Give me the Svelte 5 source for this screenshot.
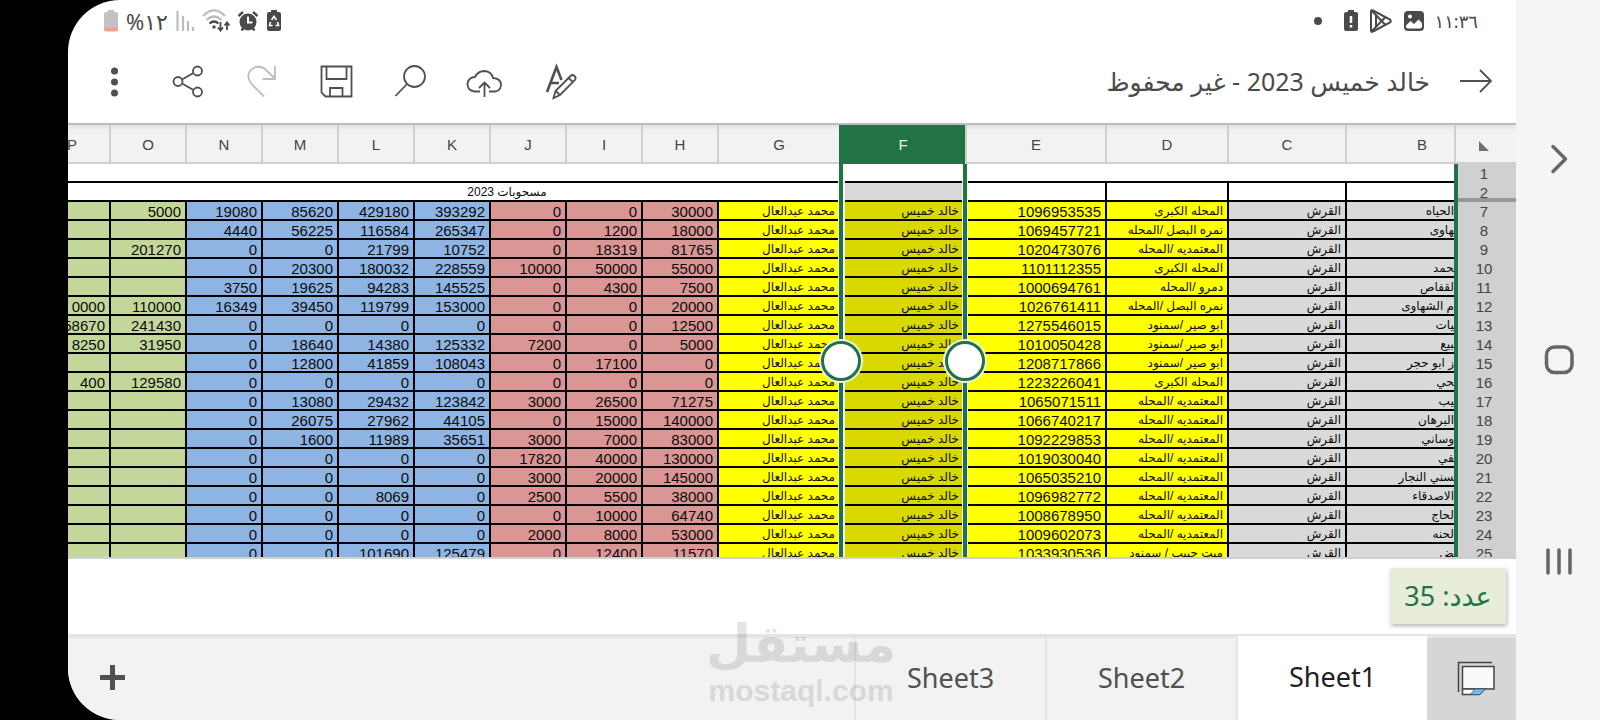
<script>
  const columns = [
    { id: 'B', width: 109 },
    { id: 'C', width: 118 },
    { id: 'D', width: 122 },
    { id: 'E', width: 140 },
    { id: 'F', width: 126 },
    { id: 'G', width: 122 },
    { id: 'H', width: 76 },
    { id: 'I', width: 76 },
    { id: 'J', width: 76 },
    { id: 'K', width: 76 },
    { id: 'L', width: 76 },
    { id: 'M', width: 76 },
    { id: 'N', width: 76 },
    { id: 'O', width: 76 },
    { id: 'P', width: 76 }
  ];
  const headWidth = 62;
  const selected = 'F';
  const tableWidth = headWidth + columns.reduce((sum, c) => sum + c.width, 0);
  const selectedIndex = columns.findIndex((c) => c.id === selected);
  const selectionStart = headWidth + columns.slice(0, selectedIndex).reduce((sum, c) => sum + c.width, 0) - 2;
  const selectionWidth = columns[selectedIndex].width + 2;

  const kabir = 'المحله الكبرى';
  const namra = 'نمره البصل /المحله';
  const motam = 'المعتمديه /المحله';
  const abu = 'ابو صير /سمنود';

  // row number, B, D, E, then H to P
  const rows = [
    [7, 'الحياه', kabir, '1096953535', 30000, 0, 0, 393292, 429180, 85620, 19080, 5000, ''],
    [8, '\u200dهاوى', namra, '1069457721', 18000, 1200, 0, 265347, 116584, 56225, 4440, '', ''],
    [9, '', motam, '1020473076', 81765, 18319, 0, 10752, 21799, 0, 0, 201270, ''],
    [10, '\u200dحمد', kabir, '1101112355', 55000, 50000, 10000, 228559, 180032, 20300, 0, '', ''],
    [11, 'لقفاص', 'دمرو /المحله', '1000694761', 7500, 4300, 0, 145525, 94283, 19625, 3750, '', ''],
    [12, 'م الشهاوى', namra, '1026761411', 20000, 0, 0, 153000, 119799, 39450, 16349, 110000, '0000'],
    [13, '\u200dيات', abu, '1275546015', 12500, 0, 0, 0, 0, 0, 0, 241430, 58670],
    [14, '\u200dبيع', abu, '1010050428', 5000, 0, 7200, 125332, 14380, 18640, 0, 31950, 8250],
    [15, 'ز ابو حجر', abu, '1208717866', 0, 17100, 0, 108043, 41859, 12800, 0, '', ''],
    [16, '\u200dحي', kabir, '1223226041', 0, 0, 0, 0, 0, 0, 0, 129580, 400],
    [17, '\u200dيب', motam, '1065071511', 71275, 26500, 3000, 123842, 29432, 13080, 0, '', ''],
    [18, 'البرهان', motam, '1066740217', 140000, 15000, 0, 44105, 27962, 26075, 0, '', ''],
    [19, 'وساني', motam, '1092229853', 83000, 7000, 3000, 35651, 11989, 1600, 0, '', ''],
    [20, '\u200dفي', motam, '1019030040', 130000, 40000, 17820, 0, 0, 0, 0, '', ''],
    [21, '\u200dسني النجار', motam, '1065035210', 145000, 20000, 3000, 0, 0, 0, 0, '', ''],
    [22, 'الاصدقاء', motam, '1096982772', 38000, 5500, 2500, 0, 8069, 0, 0, '', ''],
    [23, 'لحاج', motam, '1008678950', 64740, 10000, 0, 0, 0, 0, 0, '', ''],
    [24, 'لحنه', motam, '1009602073', 53000, 8000, 2000, 0, 0, 0, 0, '', ''],
    [25, '\u200dض', 'ميت حبيب / سمنود', '1033930536', 11570, 12400, 0, 125479, 101690, 0, 0, '', '']
  ];
  const tones = ['red', 'red', 'red', 'blue', 'blue', 'blue', 'blue', 'green', 'green'];

  let active = $state('Sheet1');
</script>

<div class="device" dir="rtl" lang="ar">
  <nav class="system">
    <button aria-label="رجوع">
      <svg width="40" height="40" viewBox="0 0 40 40"><path d="M14 7.500 L26.500 20 L14 32.500" class="nav-line" /></svg>
    </button>
    <button aria-label="الرئيسية">
      <svg width="40" height="40" viewBox="0 0 40 40"><rect x="7.500" y="7" width="25.500" height="25.500" rx="8" class="nav-line" /></svg>
    </button>
    <button aria-label="التطبيقات الأخيرة">
      <svg width="40" height="40" viewBox="0 0 40 40"><path d="M9 9V32M20 9V32M31 9V32" class="nav-line" /></svg>
    </button>
  </nav>

  <main class="screen">
    <div class="status">
      <div class="status-group">
        <span class="clock" dir="ltr">١١:٣٦</span>
        <svg width="22" height="22" viewBox="0 0 22 22">
          <rect x="1" y="1" width="20" height="20" rx="4" fill="#4a4a4a" />
          <circle cx="7" cy="6.500" r="2" fill="#fff" />
          <path d="M3 15.500 L7.500 11 L11 14 L15.500 9.500 L19 13 V16.500 Q19 18.500 17 18.500 H5 Q3 18.500 3 16.500Z" fill="#fff" />
        </svg>
        <svg width="24" height="26" viewBox="0 0 24 26" class="thin">
          <path d="M2 3.500 Q2 1.500 4 2.500 L21 11.500 Q22.500 13 21 14.500 L4 23.500 Q2 24.500 2 22.500Z" />
          <path d="M3 3 L16.500 17 M3 23 L16.500 9 M7 7.500 L7 18.500" />
        </svg>
        <svg width="16" height="22" viewBox="0 0 16 22">
          <path d="M5 0h6v2h2q2 0 2 2v15q0 2-2 2H3q-2 0-2-2V4q0-2 2-2h2z" fill="#4a4a4a" />
          <path d="M8 6v7M8 15v2.500" stroke="#fff" stroke-width="2.500" />
        </svg>
        <svg width="10" height="10" viewBox="0 0 10 10" class="dot"><circle cx="5" cy="5" r="4" fill="#4a4a4a" /></svg>
      </div>
      <div class="status-group end">
        <svg width="16" height="22" viewBox="0 0 16 22">
          <path d="M5 0h6v2h2q2 0 2 2v15q0 2-2 2H3q-2 0-2-2V4q0-2 2-2h2z" fill="#4a4a4a" />
          <path d="M5.500 10 L8 6.500 L10.500 10 M11.500 12 L12.500 15.500 H9.500 M6.500 15.500 H3.500 L4.500 12" fill="none" stroke="#fff" stroke-width="1.600" />
        </svg>
        <svg width="22" height="22" viewBox="0 0 22 22">
          <circle cx="11" cy="12" r="8.500" fill="#4a4a4a" />
          <path d="M1.500 6 L6 2 M20.500 6 L16 2 M4.500 20.500 L6.500 18 M17.500 20.500 L15.500 18" stroke="#4a4a4a" stroke-width="2.400" />
          <path d="M11 6.500 V12.500 H15.500" fill="none" stroke="#fff" stroke-width="2" />
        </svg>
        <svg width="28" height="24" viewBox="0 0 28 24" fill="none">
          <path d="M1 7 Q12 -4 23 7" stroke="#bcbcbc" stroke-width="2.200" />
          <path d="M4.500 11 Q12 4 19.500 11" stroke="#bcbcbc" stroke-width="2.200" />
          <path d="M7.500 14.500 Q12 10.500 16.500 14.500" stroke="#4a4a4a" stroke-width="2.200" />
          <circle cx="12" cy="18" r="1.700" fill="#4a4a4a" />
          <path d="M18.500 13V21M16 18.500L18.500 21.500L21 18.500M25 21V14M22.500 16.500L25 13.500L27.500 16.500" stroke="#4a4a4a" stroke-width="1.800" />
        </svg>
        <svg width="20" height="22" viewBox="0 0 20 22">
          <path d="M2.500 1V21M8 6V21M13 11V21M18 17V21" stroke="#bcbcbc" stroke-width="2.200" />
        </svg>
        <span class="charge" dir="ltr">%١٢</span>
        <svg width="16" height="22" viewBox="0 0 16 22">
          <path d="M5 0h6v2h2q2 0 2 2v15q0 2-2 2H3q-2 0-2-2V4q0-2 2-2h2z" fill="#c2c2c2" />
          <path d="M1 17.500h14v2q0 2-2 2H3q-2 0-2-2z" fill="#f0a08c" />
        </svg>
      </div>
    </div>

    <header class="toolbar">
      <button class="back" aria-label="عودة">
        <svg width="40" height="40" viewBox="0 0 40 40" class="line"><path d="M4 20H35M24 9L35 20L24 31" /></svg>
      </button>
      <h1>خالد خميس 2023 - غير محفوظ</h1>
      <div class="actions">
        <button aria-label="تنسيق">
          <svg width="40" height="40" viewBox="0 0 40 40" class="line">
            <path d="M9 31 L18.500 6 L23.500 19 M12.500 22 H21" stroke-width="2.600" />
            <path d="M15.500 37 L17.500 30 L32.500 15 Q34.500 13 36.500 15 T37 19 L22 34Z M17.500 30L22 34 M30.500 17L35 21" />
          </svg>
        </button>
        <button aria-label="رفع إلى السحابة">
          <svg width="40" height="40" viewBox="0 0 40 40" class="line">
            <path d="M16 30.500H10.500Q3.500 29.500 3.500 23Q4 16.500 11 16Q14 10 20.500 10Q27.500 10.500 29 17Q37 17.500 37 24Q36.500 30 31 30.500H25" />
            <path d="M20.500 36V22M15 27L20.500 21.500L26 27" />
          </svg>
        </button>
        <button aria-label="بحث">
          <svg width="40" height="40" viewBox="0 0 40 40" class="line"><circle cx="24.500" cy="15.500" r="10.500" /><path d="M17 23L5.500 35" /></svg>
        </button>
        <button aria-label="حفظ">
          <svg width="40" height="40" viewBox="0 0 40 40" class="line">
            <path d="M5.500 5.500H35.500V35.500H9.500L5.500 31.500Z M10.500 5.500V18H30.500V5.500 M14 35.500V27H26.500V35.500" />
          </svg>
        </button>
        <button aria-label="إعادة" disabled>
          <svg width="40" height="40" viewBox="0 0 40 40" class="line">
            <path d="M22 35.500L9.500 23Q4 16 8 10Q14 3 22.500 7.500L33 17.500M33 5V18H20.500" />
          </svg>
        </button>
        <button aria-label="مشاركة">
          <svg width="40" height="40" viewBox="0 0 40 40" class="line">
            <circle cx="10" cy="20.500" r="4.500" /><circle cx="29.500" cy="10" r="4.500" /><circle cx="29.500" cy="31" r="4.500" />
            <path d="M14 18.500L25.500 12M14 22.500L25.500 29" />
          </svg>
        </button>
        <button aria-label="خيارات أخرى">
          <svg width="40" height="40" viewBox="0 0 40 40" fill="#505050">
            <circle cx="20.500" cy="10" r="3.500" /><circle cx="20.500" cy="21" r="3.500" /><circle cx="20.500" cy="32" r="3.500" />
          </svg>
        </button>
      </div>
    </header>

    <section class="grid">
      <table style:width="{tableWidth}px">
        <colgroup>
          <col style:width="{headWidth}px" />
          {#each columns as c (c.id)}<col style:width="{c.width}px" />{/each}
        </colgroup>
        <thead>
          <tr>
            <th class="corner">
              <svg width="12" height="12" viewBox="0 0 12 12"><path d="M1 1V11H11Z" fill="#6e6e6e" /></svg>
            </th>
            {#each columns as c (c.id)}
              <th scope="col" class:chosen={c.id === selected} class:cut={c.id === 'B'}>{c.id}</th>
            {/each}
          </tr>
        </thead>
        <tbody>
          <tr class="plain">
            <th scope="row">1</th>
            <td colspan="15"></td>
          </tr>
          <tr>
            <th scope="row" class="frozen">2</th>
            <td></td>
            <td></td>
            <td></td>
            <td class="open"></td>
            <td class="open gray"></td>
            <td colspan="8" class="open caption ar">مسحوبات 2023</td>
            <td colspan="2" class="open"></td>
          </tr>
          {#each rows as [n, b, d, e, ...nums] (n)}
            <tr>
              <th scope="row">{n}</th>
              <td class="ar gray edge">{b}</td>
              <td class="ar gray">القرش</td>
              <td class="ar yellow">{d}</td>
              <td class="num yellow">{e}</td>
              <td class="ar olive">خالد خميس</td>
              <td class="ar yellow">محمد عبدالعال</td>
              {#each nums as v, i}
                <td class="num {tones[i]}">{v}</td>
              {/each}
            </tr>
          {/each}
        </tbody>
      </table>
      <div class="selection" style:right="{selectionStart}px" style:width="{selectionWidth}px">
        <span class="handle first"></span>
        <span class="handle last"></span>
      </div>
    </section>

    <div class="summary"><output>عدد: 35</output></div>

    <footer class="tabs">
      <button class="sheets" aria-label="كل الأوراق">
        <svg width="40" height="40" viewBox="0 0 40 40">
          <path d="M3.500 33V3.500H37" fill="none" stroke="#444" stroke-width="1.500" />
          <path d="M7.500 7.500H39V30H7.500Z" fill="#fafafa" stroke="#444" stroke-width="1.500" />
          <path d="M7.500 30H29.500L24.500 35.500H7.500Z" fill="#fff" stroke="#444" stroke-width="1.500" />
          <path d="M20 30H30L25 35.500H15.500Z" fill="#7ab8f0" stroke="#33648f" stroke-width="1" />
        </svg>
      </button>
      {#each ['Sheet1', 'Sheet2', 'Sheet3'] as name (name)}
        <button class="tab" class:active={active === name} onclick={() => (active = name)}>{name}</button>
      {/each}
      <button class="add" aria-label="إضافة ورقة">
        <svg width="25" height="25" viewBox="0 0 25 25"><path d="M0 12.500H25M12.500 0V25" stroke="#505050" stroke-width="5" /></svg>
      </button>
    </footer>
  </main>

  <div class="watermark" aria-hidden="true">
    <span class="brand">مستقل</span>
    <span class="domain" dir="ltr">mostaql.com</span>
  </div>
</div>

<style>
  :global(body) {
    margin: 0;
    background: #000;
  }
  .device {
    position: relative;
    display: flex;
    height: 100vh;
    padding-left: 68px;
    box-sizing: border-box;
    overflow: hidden;
    background: #000;
    font-family: 'Noto Sans', 'DejaVu Sans', sans-serif;
    color: #4a4a4a;
  }
  button {
    display: flex;
    align-items: center;
    justify-content: center;
    margin: 0;
    padding: 0;
    border: 0;
    background: none;
    font: inherit;
    color: inherit;
  }
  svg {
    display: block;
    flex: none;
  }
  .system {
    flex: none;
    display: flex;
    flex-direction: column;
    align-items: center;
    justify-content: center;
    gap: 161px;
    width: 84px;
    padding-left: 2px;
    box-sizing: border-box;
    background: #f5f5f5;
  }
  .nav-line {
    fill: none;
    stroke: #666;
    stroke-width: 3.5;
    stroke-linecap: round;
    stroke-linejoin: round;
  }
  .screen {
    flex: 1;
    min-width: 0;
    display: flex;
    flex-direction: column;
    overflow: hidden;
    background: #fff;
    border-radius: 52px 0 0 52px;
  }
  .status {
    flex: none;
    display: flex;
    align-items: center;
    justify-content: space-between;
    height: 42px;
    padding: 0 38px 0 35px;
  }
  .status-group {
    display: flex;
    align-items: center;
    gap: 10px;
  }
  .status-group.end {
    gap: 7px;
  }
  .status-group .dot {
    margin-right: 10px;
  }
  .clock {
    font-size: 18px;
    line-height: 24px;
  }
  .charge {
    font-size: 22px;
    line-height: 24px;
  }
  .thin {
    fill: none;
    stroke: #4a4a4a;
    stroke-width: 2;
  }
  .toolbar {
    flex: none;
    display: flex;
    align-items: center;
    height: 77px;
    padding: 0 20px 4px 9px;
    border-bottom: 2px solid #bdbdbd;
  }
  .line {
    fill: none;
    stroke: #505050;
    stroke-width: 1.8;
  }
  button:disabled .line {
    stroke: #bdbdbd;
  }
  h1 {
    flex: 1;
    margin: 0 26px 0 0;
    font-size: 25px;
    line-height: 36px;
    font-weight: 400;
    white-space: nowrap;
  }
  .actions {
    display: flex;
  }
  .actions button {
    width: 74px;
    height: 60px;
  }
  .grid {
    position: relative;
    flex: 1;
    min-height: 0;
    overflow: hidden;
    border-bottom: 2px solid #d0d0d0;
  }
  table {
    table-layout: fixed;
    border-collapse: separate;
    border-spacing: 0;
    font-family: 'Liberation Sans', 'DejaVu Sans', sans-serif;
    font-size: 15px;
    line-height: 15px;
  }
  thead th {
    height: 35px;
    padding: 2px 0 0;
    border-bottom: 2px solid #d0d0d0;
    border-left: 2px solid #d0d0d0;
    background: linear-gradient(#e2e2e2, #f2f2f2 6px);
    font-weight: 400;
    color: #444;
  }
  thead th.chosen {
    background: #217346;
    border-color: #217346;
    color: #e6f2ea;
  }
  thead th.cut {
    padding-right: 27px;
    text-align: right;
  }
  .corner svg {
    margin: 2px 26px 0 0;
  }
  tbody th {
    padding: 2px 6px 2px 0;
    border-left: 4px solid #217346;
    background: #d0d0d0;
    font-weight: 400;
    color: #444;
  }
  tbody th.frozen {
    box-shadow: inset 0 -4px #979797;
  }
  tbody td {
    padding: 2px 4px 0;
    border-left: 2px solid #000;
    border-bottom: 2px solid #000;
    color: #0c0c0c;
    overflow: hidden;
    white-space: nowrap;
    text-align: right;
  }
  td.open,
  .plain td {
    border-left: 0;
  }
  td.caption {
    text-align: center;
    padding-right: 14px;
  }
  .ar {
    font-size: 12px;
  }
  .num {
    direction: ltr;
  }
  td.edge {
    padding-right: 0;
  }
  .gray {
    background: #d9d9d9;
  }
  .yellow {
    background: #ff0;
  }
  .olive {
    background: #d9d900;
  }
  td.olive {
    padding-right: 6px;
  }
  .red {
    background: #d99694;
  }
  .blue {
    background: #8db4e2;
  }
  .green {
    background: #c4d79b;
  }
  .selection {
    position: absolute;
    top: 39px;
    bottom: 0;
    box-sizing: border-box;
    border: solid #217346;
    border-width: 0 4px;
    box-shadow:
      inset 2px 0 #f4f8ee,
      inset -1px 0 #f4f8ee,
      1px 0 #f4f8ee,
      -1px 0 #f4f8ee;
  }
  .handle {
    position: absolute;
    top: 50%;
    width: 34px;
    height: 34px;
    border: 3px solid #217346;
    border-radius: 50%;
    background: #fff;
    box-shadow: 0 0 0 2px #f1f5e6;
    transform: translateY(-50%);
  }
  .first {
    left: -22px;
  }
  .last {
    right: -22px;
  }
  .summary {
    flex: none;
    display: flex;
    padding: 9px 10px 10px;
  }
  output {
    width: 116px;
    border-radius: 2px;
    background: #e7edd8;
    box-shadow: 1px 2px 4px rgba(0, 0, 0, 0.3);
    font-size: 27px;
    line-height: 56px;
    text-align: center;
    color: #217346;
  }
  .tabs {
    flex: none;
    display: flex;
    height: 82px;
    border-top: 4px solid #e4e4e4;
    background: #f2f2f2;
  }
  .tabs button {
    padding-bottom: 4px;
  }
  .tabs .sheets {
    width: 89px;
    padding-left: 6px;
    padding-bottom: 0;
    background: #d6d6d6;
  }
  .tab {
    width: 191px;
    border-left: 2px solid #e4e4e4;
    font-size: 27px;
    color: #505050;
  }
  .tab.active {
    margin-top: -2px;
    background: #fff;
    color: #222;
  }
  .add {
    margin: 0 auto 0 32px;
  }
  .watermark {
    position: absolute;
    left: 706px;
    bottom: 12px;
    display: flex;
    flex-direction: column;
    align-items: center;
    font-weight: 700;
    color: #000;
    opacity: 0.1;
    pointer-events: none;
  }
  .brand {
    font-family: 'DejaVu Sans', sans-serif;
    font-size: 52px;
    line-height: 60px;
  }
  .domain {
    font-family: 'Liberation Sans', sans-serif;
    font-size: 30px;
    line-height: 34px;
  }
</style>
